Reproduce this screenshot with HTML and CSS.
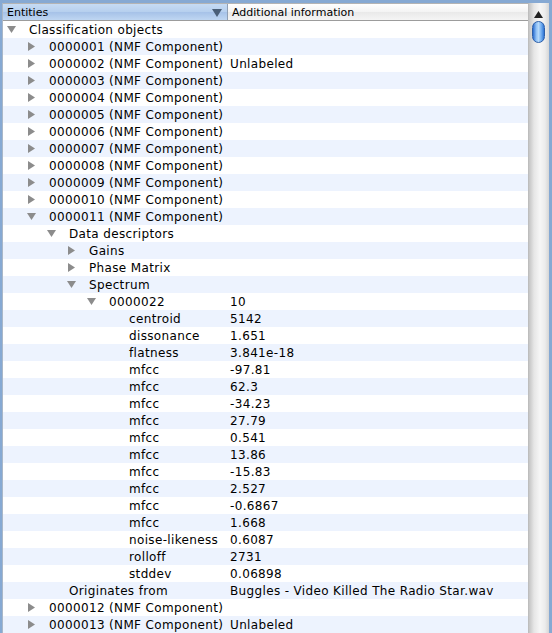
FILE: index.html
```html
<!DOCTYPE html>
<html>
<head>
<meta charset="utf-8">
<link rel="stylesheet" href="styles.css">
</head>
<body>
<div class="frame">
  <div class="table">
    <div class="header">
      <div class="hcell hsel">Entities<svg class="sort" width="10" height="8" viewBox="0 0 10 8"><polygon points="0,0 10,0 5,8" fill="#4a5f78"/></svg></div>
      <div class="hcell hplain">Additional information</div>
    </div>
    <div class="rows">
      <div class="row"><div class="name l0"><span class="tw"><svg class="down" width="9" height="8" viewBox="0 0 9 8"><polygon points="0,0 9,0 4.5,7"/></svg></span>Classification objects</div><div class="val"></div></div>
      <div class="row"><div class="name l1"><span class="tw"><svg class="right" width="8" height="9" viewBox="0 0 8 9"><polygon points="0,0 7,4.5 0,9"/></svg></span>0000001 (NMF Component)</div><div class="val"></div></div>
      <div class="row"><div class="name l1"><span class="tw"><svg class="right" width="8" height="9" viewBox="0 0 8 9"><polygon points="0,0 7,4.5 0,9"/></svg></span>0000002 (NMF Component)</div><div class="val">Unlabeled</div></div>
      <div class="row"><div class="name l1"><span class="tw"><svg class="right" width="8" height="9" viewBox="0 0 8 9"><polygon points="0,0 7,4.5 0,9"/></svg></span>0000003 (NMF Component)</div><div class="val"></div></div>
      <div class="row"><div class="name l1"><span class="tw"><svg class="right" width="8" height="9" viewBox="0 0 8 9"><polygon points="0,0 7,4.5 0,9"/></svg></span>0000004 (NMF Component)</div><div class="val"></div></div>
      <div class="row"><div class="name l1"><span class="tw"><svg class="right" width="8" height="9" viewBox="0 0 8 9"><polygon points="0,0 7,4.5 0,9"/></svg></span>0000005 (NMF Component)</div><div class="val"></div></div>
      <div class="row"><div class="name l1"><span class="tw"><svg class="right" width="8" height="9" viewBox="0 0 8 9"><polygon points="0,0 7,4.5 0,9"/></svg></span>0000006 (NMF Component)</div><div class="val"></div></div>
      <div class="row"><div class="name l1"><span class="tw"><svg class="right" width="8" height="9" viewBox="0 0 8 9"><polygon points="0,0 7,4.5 0,9"/></svg></span>0000007 (NMF Component)</div><div class="val"></div></div>
      <div class="row"><div class="name l1"><span class="tw"><svg class="right" width="8" height="9" viewBox="0 0 8 9"><polygon points="0,0 7,4.5 0,9"/></svg></span>0000008 (NMF Component)</div><div class="val"></div></div>
      <div class="row"><div class="name l1"><span class="tw"><svg class="right" width="8" height="9" viewBox="0 0 8 9"><polygon points="0,0 7,4.5 0,9"/></svg></span>0000009 (NMF Component)</div><div class="val"></div></div>
      <div class="row"><div class="name l1"><span class="tw"><svg class="right" width="8" height="9" viewBox="0 0 8 9"><polygon points="0,0 7,4.5 0,9"/></svg></span>0000010 (NMF Component)</div><div class="val"></div></div>
      <div class="row"><div class="name l1"><span class="tw"><svg class="down" width="9" height="8" viewBox="0 0 9 8"><polygon points="0,0 9,0 4.5,7"/></svg></span>0000011 (NMF Component)</div><div class="val"></div></div>
      <div class="row"><div class="name l2"><span class="tw"><svg class="down" width="9" height="8" viewBox="0 0 9 8"><polygon points="0,0 9,0 4.5,7"/></svg></span>Data descriptors</div><div class="val"></div></div>
      <div class="row"><div class="name l3"><span class="tw"><svg class="right" width="8" height="9" viewBox="0 0 8 9"><polygon points="0,0 7,4.5 0,9"/></svg></span>Gains</div><div class="val"></div></div>
      <div class="row"><div class="name l3"><span class="tw"><svg class="right" width="8" height="9" viewBox="0 0 8 9"><polygon points="0,0 7,4.5 0,9"/></svg></span>Phase Matrix</div><div class="val"></div></div>
      <div class="row"><div class="name l3"><span class="tw"><svg class="down" width="9" height="8" viewBox="0 0 9 8"><polygon points="0,0 9,0 4.5,7"/></svg></span>Spectrum</div><div class="val"></div></div>
      <div class="row"><div class="name l4"><span class="tw"><svg class="down" width="9" height="8" viewBox="0 0 9 8"><polygon points="0,0 9,0 4.5,7"/></svg></span>0000022</div><div class="val">10</div></div>
      <div class="row"><div class="name l5"><span class="tw"></span>centroid</div><div class="val">5142</div></div>
      <div class="row"><div class="name l5"><span class="tw"></span>dissonance</div><div class="val">1.651</div></div>
      <div class="row"><div class="name l5"><span class="tw"></span>flatness</div><div class="val">3.841e-18</div></div>
      <div class="row"><div class="name l5"><span class="tw"></span>mfcc</div><div class="val">-97.81</div></div>
      <div class="row"><div class="name l5"><span class="tw"></span>mfcc</div><div class="val">62.3</div></div>
      <div class="row"><div class="name l5"><span class="tw"></span>mfcc</div><div class="val">-34.23</div></div>
      <div class="row"><div class="name l5"><span class="tw"></span>mfcc</div><div class="val">27.79</div></div>
      <div class="row"><div class="name l5"><span class="tw"></span>mfcc</div><div class="val">0.541</div></div>
      <div class="row"><div class="name l5"><span class="tw"></span>mfcc</div><div class="val">13.86</div></div>
      <div class="row"><div class="name l5"><span class="tw"></span>mfcc</div><div class="val">-15.83</div></div>
      <div class="row"><div class="name l5"><span class="tw"></span>mfcc</div><div class="val">2.527</div></div>
      <div class="row"><div class="name l5"><span class="tw"></span>mfcc</div><div class="val">-0.6867</div></div>
      <div class="row"><div class="name l5"><span class="tw"></span>mfcc</div><div class="val">1.668</div></div>
      <div class="row"><div class="name l5"><span class="tw"></span>noise-likeness</div><div class="val">0.6087</div></div>
      <div class="row"><div class="name l5"><span class="tw"></span>rolloff</div><div class="val">2731</div></div>
      <div class="row"><div class="name l5"><span class="tw"></span>stddev</div><div class="val">0.06898</div></div>
      <div class="row"><div class="name l2"><span class="tw"></span>Originates from</div><div class="val">Buggles - Video Killed The Radio Star.wav</div></div>
      <div class="row"><div class="name l1"><span class="tw"><svg class="right" width="8" height="9" viewBox="0 0 8 9"><polygon points="0,0 7,4.5 0,9"/></svg></span>0000012 (NMF Component)</div><div class="val"></div></div>
      <div class="row"><div class="name l1"><span class="tw"><svg class="right" width="8" height="9" viewBox="0 0 8 9"><polygon points="0,0 7,4.5 0,9"/></svg></span>0000013 (NMF Component)</div><div class="val">Unlabeled</div></div>
    </div>
  </div>
  <div class="scrollbar">
    <svg class="arrow" width="9" height="7" viewBox="0 0 9 7"><polygon points="4.5,0 9,7 0,7" fill="#222"/></svg>
    <div class="thumb"></div>
  </div>
</div>
</body>
</html>
```

FILE: styles.css
```css
html, body {
  margin: 0;
  padding: 0;
  background: #ffffff;
}
body {
  width: 552px;
  height: 633px;
  overflow: hidden;
  font-family: "DejaVu Sans", "Liberation Sans", sans-serif;
  color: #000;
}
.frame {
  box-sizing: border-box;
  width: 552px;
  height: 633px;
  display: flex;
  border-left: 2px solid #86a9d3;
  border-right: 3px solid #86a9d3;
  border-top: 3px solid #86a9d3;
  overflow: hidden;
}
.table {
  flex: 1;
  display: flex;
  flex-direction: column;
  border-left: 1px solid #a9b7c8;
  min-width: 0;
}
.header {
  display: flex;
  border-top: 1px solid #b4b4b4;
  border-bottom: 1px solid #9c9c9c;
  font-size: 11px;
  box-sizing: border-box;
  height: 18px;
}
.hcell {
  display: flex;
  align-items: center;
  box-sizing: border-box;
  padding-left: 4px;
}
.hsel {
  width: 225px;
  position: relative;
  background: linear-gradient(#c6dbf4, #b6cfee 50%, #a6c2e8 51%, #bfd6f2);
  border-right: 1px solid #8f9fb5;
}
.sort {
  position: absolute;
  right: 5px;
  top: 5px;
}
.hplain {
  flex: 1;
  background: linear-gradient(#ffffff, #f3f3f3 50%, #e9e9e9 51%, #f5f5f5);
}
.rows {
  flex: 1;
  font-size: 12px;
  letter-spacing: 0.35px;
}
.row {
  height: 17px;
  display: flex;
  align-items: center;
  white-space: nowrap;
}
.row:nth-child(even) {
  background: #edf3fe;
}
.name {
  width: 226px;
  flex: none;
  display: flex;
  align-items: center;
  box-sizing: border-box;
}
.l0 { padding-left: 0; }
.l1 { padding-left: 20px; }
.l2 { padding-left: 40px; }
.l3 { padding-left: 60px; }
.l4 { padding-left: 80px; }
.l5 { padding-left: 100px; }
.tw {
  width: 26px;
  flex: none;
  display: flex;
  align-items: center;
  padding-left: 4px;
  box-sizing: border-box;
  height: 17px;
}
.tw svg polygon {
  fill: #8c8c8c;
}
.right { margin-left: 1px; }
.val {
  padding-left: 1px;
}
.scrollbar {
  width: 20px;
  flex: none;
  position: relative;
  background: linear-gradient(to right, #c4c4c4, #e6e6e6 25%, #f6f6f6 55%, #ececec 80%, #d6d6d6);
  border-left: 1px solid #bdbdbd;
}
.arrow {
  position: absolute;
  left: 5px;
  top: 8px;
}
.thumb {
  position: absolute;
  left: 3px;
  top: 18px;
  width: 13px;
  height: 22px;
  border-radius: 7px;
  background: linear-gradient(to right, #2a6ccf, #8fc0f5 30%, #b5d9fb 50%, #73aef0 75%, #2f74d4);
  border: 1px solid #2d5fa8;
  box-sizing: border-box;
}
```
